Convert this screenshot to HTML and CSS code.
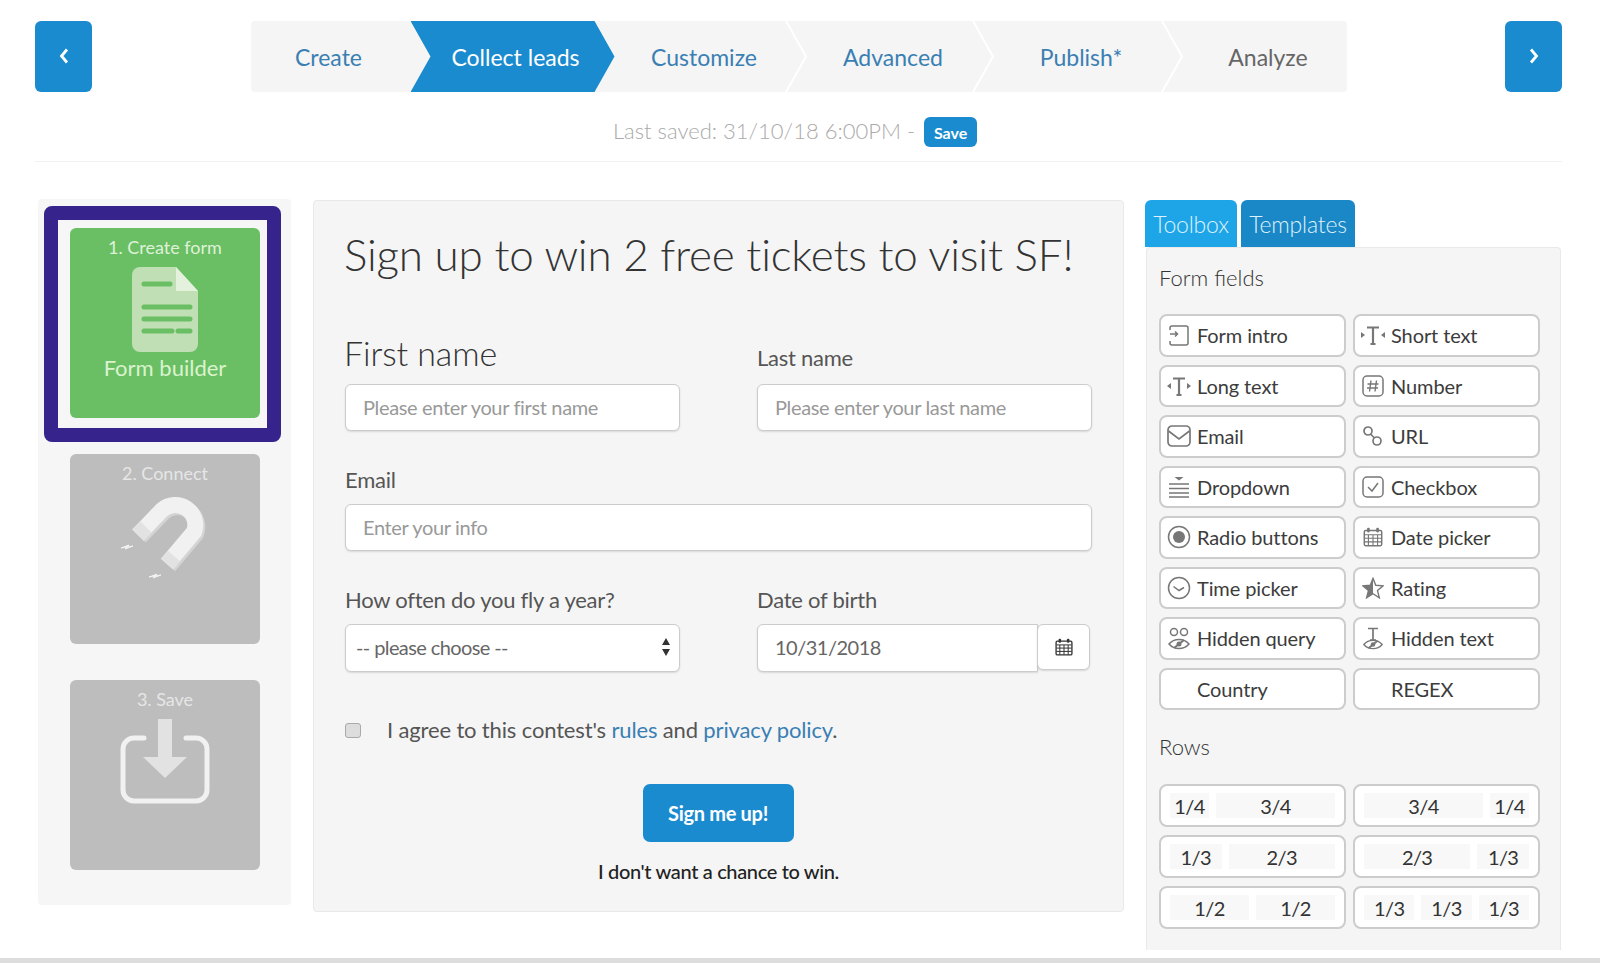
FILE: index.html
```html
<!DOCTYPE html>
<html lang="en">
<head>
    <meta charset="UTF-8">
    <meta name="viewport" content="width=device-width, initial-scale=1.0">
    <title>Form builder</title>
    <link rel="stylesheet" href="styles.css">
</head>
<body>
    <svg class="defs" aria-hidden="true">
        <symbol id="i-calendar" viewBox="0 0 24 24">
            <path d="M4 5h16a1.500 1.500 0 0 1 1.500 1.500V20a1.500 1.500 0 0 1-1.500 1.500H4A1.500 1.500 0 0 1 2.500 20V6.500A1.500 1.500 0 0 1 4 5z" fill="none" stroke="currentColor" stroke-width="1.600"/>
            <path d="M3 9.500h18M3 13.300h18M3 17.300h18M7 9.500v12M12 9.500v12M17 9.500v12" stroke="currentColor" stroke-width="1.200"/>
            <rect x="5.500" y="2" width="3" height="5" rx="1.200" fill="currentColor"/>
            <rect x="15.500" y="2" width="3" height="5" rx="1.200" fill="currentColor"/>
        </symbol>
        <symbol id="i-eye" viewBox="0 0 24 12">
            <path d="M2 6c5-6 15-6 20 0-5 6-15 6-20 0z" fill="none" stroke="currentColor" stroke-width="1.500"/>
            <path d="M7 10l10-8" stroke="currentColor" stroke-width="2"/>
            <circle cx="12" cy="6" r="2.500" fill="currentColor"/>
        </symbol>
    </svg>

    <header class="topbar">
        <div class="topbar-row">
            <button class="nav-btn">
                <svg width="12" height="16" viewBox="0 0 12 16"><path d="M9 1.500L3.500 8 9 14.500" fill="none" stroke="#fff" stroke-width="2.800"/></svg>
            </button>
            <nav class="steps">
                <a class="step step-first">Create</a>
                <a class="step step-active">Collect leads</a>
                <a class="step step-customize">Customize<svg class="step-sep" viewBox="0 0 22 71"><path d="M1 0l20 35.500L1 71" fill="none" stroke="#fff" stroke-width="2"/></svg></a>
                <a class="step step-advanced">Advanced<svg class="step-sep" viewBox="0 0 22 71"><path d="M1 0l20 35.500L1 71" fill="none" stroke="#fff" stroke-width="2"/></svg></a>
                <a class="step step-publish">Publish*<svg class="step-sep" viewBox="0 0 22 71"><path d="M1 0l20 35.500L1 71" fill="none" stroke="#fff" stroke-width="2"/></svg></a>
                <a class="step step-last">Analyze</a>
            </nav>
            <button class="nav-btn">
                <svg width="12" height="16" viewBox="0 0 12 16"><path d="M3 1.500L8.500 8 3 14.500" fill="none" stroke="#fff" stroke-width="2.800"/></svg>
            </button>
        </div>
        <div class="save-row">
            <span class="save-text">Last saved: 31/10/18 6:00PM</span>
            <span class="save-text">-</span>
            <button class="save-btn">Save</button>
        </div>
    </header>

    <main class="workspace">
        <aside class="sidebar">
            <div class="highlight">
                <div class="phase phase-green">
                    <div class="phase-title">1. Create form</div>
                    <svg class="phase-doc" width="66" height="85" viewBox="0 0 66 85">
                        <path d="M8 0h36l22 24v53a8 8 0 0 1-8 8H8a8 8 0 0 1-8-8V8a8 8 0 0 1 8-8z" fill="#c0dfb4"/>
                        <path d="M44 0l22 24H44z" fill="#e4f1dd"/>
                        <path d="M12 17h26M12 40h46M12 52h46M12 64h28M46 64h12" stroke="#6abf64" stroke-width="5" stroke-linecap="round"/>
                    </svg>
                    <div class="phase-label">Form builder</div>
                </div>
            </div>
            <div class="phase phase-gray phase-connect">
                <div class="phase-title">2. Connect</div>
                <svg class="phase-magnet" width="120" height="110" viewBox="0 0 120 110">
                    <path d="M30 57L54 32A20 20 0 0 1 86 54L59 86" fill="none" stroke="#d4d4d4" stroke-width="16"/>
                    <path d="M28 55L52 30A20 20 0 0 1 84 52L57 84" fill="none" stroke="#f1f1f1" stroke-width="16"/>
                    <path d="M28 55l8-8M57 84l7-8" stroke="#e2e2e2" stroke-width="16"/>
                    <path d="M11 68l8-3-2 2 6-1-8 3 2-2zM39 97l8-3-2 2 6-1-8 3 2-2z" fill="#f2f2f2" stroke="#f2f2f2"/>
                </svg>
            </div>
            <div class="phase phase-gray phase-save">
                <div class="phase-title">3. Save</div>
                <svg class="phase-icon" width="90" height="88" viewBox="0 0 90 88">
                    <path d="M24 20H14A11 11 0 0 0 3 31v41a11 11 0 0 0 11 11h62a11 11 0 0 0 11-11V31a11 11 0 0 0-11-11H66" fill="none" stroke="#f1f1f1" stroke-width="5" stroke-linecap="round"/>
                    <path d="M38 1h14v38h15L45 60 23 39h15z" fill="#e2e2e2"/>
                </svg>
            </div>
        </aside>

        <section class="form-panel">
            <h1>Sign up to win 2 free tickets to visit SF!</h1>
            <form class="form-grid">
                <div class="field field-end">
                    <label class="label-big">First name</label>
                    <input class="input" placeholder="Please enter your first name">
                </div>
                <div class="field field-end">
                    <label>Last name</label>
                    <input class="input" placeholder="Please enter your last name">
                </div>
                <div class="field field-wide">
                    <label>Email</label>
                    <input class="input" placeholder="Enter your info">
                </div>
                <div class="field">
                    <label>How often do you fly a year?</label>
                    <div class="select-wrap">
                        <select class="input select"><option>-- please choose --</option></select>
                        <svg class="select-arrows" width="10" height="18" viewBox="0 0 10 18"><path d="M5 0l4 7H1zM5 18l-4-7h8z" fill="#333"/></svg>
                    </div>
                </div>
                <div class="field">
                    <label>Date of birth</label>
                    <div class="date-group">
                        <input class="input date-input" value="10/31/2018">
                        <span class="date-addon"><svg width="20" height="22"><use href="#i-calendar"/></svg></span>
                    </div>
                </div>
            </form>
            <div class="agree">
                <input type="checkbox" class="agree-box">
                <span>I agree to this contest's <a>rules</a> and <a>privacy policy</a>.</span>
            </div>
            <div class="submit-row"><button class="submit-btn">Sign me up!</button></div>
            <div class="decline">I don't want a chance to win.</div>
        </section>

        <aside class="toolbox">
            <div class="tabs">
                <div class="tab tab-on">Toolbox</div>
                <div class="tab">Templates</div>
            </div>
            <div class="tool-panel">
                <div class="tool-heading">Form fields</div>
                <div class="tool-grid">
                    <div class="tool"><span class="tool-icon"><svg width="24" height="24" viewBox="0 0 24 24" fill="none" stroke="currentColor" stroke-width="1.500"><path d="M3 7V5a2 2 0 0 1 2-2h14a2 2 0 0 1 2 2v15a2 2 0 0 1-2 2H5a2 2 0 0 1-2-2v-2"/><path d="M3 11h7M8 8.500L10.500 11 8 13.500"/></svg></span>Form intro</div>
                    <div class="tool"><span class="tool-icon"><svg width="24" height="24" viewBox="0 0 24 24"><path d="M6 4.500h12M12 4.500V21M9.500 21h5" fill="none" stroke="currentColor" stroke-width="2.200"/><path d="M0 9l4 3-4 3zM24 9l-4 3 4 3z" fill="currentColor"/></svg></span>Short text</div>
                    <div class="tool"><span class="tool-icon"><svg width="24" height="24" viewBox="0 0 24 24"><path d="M6 4.500h12M12 4.500V21M9.500 21h5" fill="none" stroke="currentColor" stroke-width="2.200"/><path d="M4 9l-4 3 4 3zM20 9l4 3-4 3z" fill="currentColor"/></svg></span>Long text</div>
                    <div class="tool"><span class="tool-icon"><svg width="24" height="24" viewBox="0 0 24 24"><rect x="2" y="2" width="20" height="20" rx="4" fill="none" stroke="currentColor" stroke-width="1.500"/><path d="M10 6.500L8.500 17.500M15.500 6.500L14 17.500M6.500 10h11M6 14h11" stroke="currentColor" stroke-width="1.400"/></svg></span>Number</div>
                    <div class="tool"><span class="tool-icon"><svg width="24" height="24" viewBox="0 0 24 24" fill="none" stroke="currentColor" stroke-width="1.700"><rect x="1" y="2" width="22" height="20" rx="4"/><path d="M1.500 7L12 15 22.500 7"/></svg></span>Email</div>
                    <div class="tool"><span class="tool-icon"><svg width="24" height="24" viewBox="0 0 24 24" fill="none" stroke="currentColor" stroke-width="1.700"><circle cx="7" cy="7" r="4"/><circle cx="16" cy="17" r="4"/><path d="M9.500 10l4 4"/></svg></span>URL</div>
                    <div class="tool"><span class="tool-icon"><svg width="24" height="24" viewBox="0 0 24 24"><path d="M7.500 2h9L12 5.500z" fill="currentColor"/><path d="M2 9h20M2 13.500h20M2 18h20M2 22h20" stroke="currentColor" stroke-width="1.600"/></svg></span>Dropdown</div>
                    <div class="tool"><span class="tool-icon"><svg width="24" height="24" viewBox="0 0 24 24" fill="none" stroke="currentColor" stroke-width="1.500"><rect x="2" y="2" width="20" height="20" rx="4"/><path d="M7 12l4 4 6-8"/></svg></span>Checkbox</div>
                    <div class="tool"><span class="tool-icon"><svg width="24" height="24" viewBox="0 0 24 24"><circle cx="12" cy="12" r="10.500" fill="none" stroke="currentColor" stroke-width="1.500"/><circle cx="12" cy="12" r="6" fill="currentColor"/></svg></span>Radio buttons</div>
                    <div class="tool"><span class="tool-icon"><svg width="22" height="22"><use href="#i-calendar"/></svg></span>Date picker</div>
                    <div class="tool"><span class="tool-icon"><svg width="24" height="24" viewBox="0 0 24 24" fill="none" stroke="currentColor" stroke-width="1.500"><circle cx="12" cy="12" r="10.500"/><path d="M6.500 10.500L12 14.500l5-3"/></svg></span>Time picker</div>
                    <div class="tool"><span class="tool-icon"><svg width="22" height="22" viewBox="0 0 24 24"><path d="M12 1.500l3 7.500 8 .6-6.100 5.200 2 7.900L12 18.300 5 22.700l2-7.900L1 9.600l8-.6z" fill="none" stroke="currentColor" stroke-width="1.500"/><path d="M12 2v16.300L5 22.700l2-7.900L1 9.600l8-.6z" fill="currentColor"/></svg></span>Rating</div>
                    <div class="tool"><span class="tool-icon"><svg width="24" height="24" viewBox="0 0 24 24"><circle cx="7" cy="6" r="3.500" fill="none" stroke="currentColor" stroke-width="1.500"/><circle cx="17" cy="6" r="3.500" fill="none" stroke="currentColor" stroke-width="1.500"/><use href="#i-eye" y="12" width="24" height="12"/></svg></span>Hidden query</div>
                    <div class="tool"><span class="tool-icon"><svg width="24" height="24" viewBox="0 0 24 24"><path d="M7 2.500h10M12 2.500V14M9 14h6" fill="none" stroke="currentColor" stroke-width="1.700"/><use href="#i-eye" y="13" width="24" height="11"/></svg></span>Hidden text</div>
                    <div class="tool"><span class="tool-icon"></span>Country</div>
                    <div class="tool"><span class="tool-icon"></span>REGEX</div>
                </div>
                <div class="tool-heading rows-heading">Rows</div>
                <div class="tool-grid rows-grid">
                    <div class="row-btn"><span class="cell c1">1/4</span><span class="cell c3">3/4</span></div>
                    <div class="row-btn"><span class="cell c3">3/4</span><span class="cell c1">1/4</span></div>
                    <div class="row-btn"><span class="cell c1t">1/3</span><span class="cell c2t">2/3</span></div>
                    <div class="row-btn"><span class="cell c2t">2/3</span><span class="cell c1t">1/3</span></div>
                    <div class="row-btn"><span class="cell ch">1/2</span><span class="cell ch">1/2</span></div>
                    <div class="row-btn"><span class="cell ch">1/3</span><span class="cell ch">1/3</span><span class="cell ch">1/3</span></div>
                </div>
            </div>
        </aside>
    </main>

    <div class="bottom-bar"></div>
</body>
</html>
```

FILE: styles.css
```css
:root {
    --blue: #1b8bcf;
    --panel: #f5f5f5;
    --line: #e9e9e9;
    --text: #555;
    --link: #3a7fb3;
}

* {
    margin: 0;
    padding: 0;
    box-sizing: border-box;
}

body {
    font-family: Lato, "Open Sans", sans-serif;
    background: #fff;
    color: var(--text);
    width: 1600px;
    height: 963px;
    overflow: hidden;
    display: flex;
    flex-direction: column;
}

.defs {
    width: 0;
    height: 0;
    position: absolute;
}

/* top bar */
.topbar {
    margin: 21px 38px 0 35px;
    border-bottom: 1px solid #f2f2f2;
    height: 141px;
}

.topbar-row {
    display: flex;
    justify-content: space-between;
    align-items: stretch;
    height: 71px;
}

.nav-btn {
    width: 57px;
    border: 0;
    border-radius: 6px;
    background: var(--blue);
    padding-top: 2px;
}

.steps {
    display: flex;
    width: 1096px;
    background: #f5f5f5;
    border-radius: 4px;
}

.step {
    position: relative;
    display: flex;
    align-items: center;
    justify-content: center;
    font-size: 23px;
    color: var(--link);
    padding-left: 28px;
}

.step-first {
    width: 160px;
    padding-left: 0;
    padding-right: 4px;
}

.step-active {
    width: 204px;
    margin-right: -20px;
    padding-left: 6px;
    background: var(--blue);
    color: #fff;
    z-index: 1;
    clip-path: polygon(0 0, 184px 0, 100% 50%, 184px 100%, 0 100%, 20px 50%);
}

.step-customize { width: 191px; }
.step-advanced { width: 187px; }
.step-publish { width: 189px; }

.step-last {
    width: 185px;
    color: #666;
}

.step-sep {
    position: absolute;
    top: 0;
    right: -21px;
    width: 22px;
    height: 71px;
    z-index: 1;
}

.save-row {
    display: flex;
    justify-content: center;
    align-items: center;
    gap: 6px;
    height: 30px;
    margin-top: 25px;
    padding-right: 7px;
    font-size: 22px;
    font-weight: 300;
    color: #aaa;
}

.save-text {
    padding-bottom: 3px;
}

.save-btn {
    width: 53px;
    height: 30px;
    margin-left: 3px;
    border: 0;
    border-radius: 6px;
    background: var(--blue);
    color: #fff;
    font: 700 16px Lato, sans-serif;
}

/* columns */
.workspace {
    flex: 1;
    display: flex;
    align-items: flex-start;
    padding: 37px 0 0 38px;
}

.sidebar {
    width: 253px;
    height: 706px;
    background: #f6f6f6;
    border-radius: 4px;
    padding: 7px 0 0 6px;
}

.highlight {
    width: 237px;
    height: 236px;
    border: 14px solid #36248c;
    border-radius: 8px;
    background: #f6f6f6;
    padding: 8px 0 0 12px;
}

.phase {
    width: 190px;
    height: 190px;
    border-radius: 6px;
    text-align: center;
}

.phase-title {
    font-size: 18px;
    line-height: 24px;
    padding-top: 7px;
    height: 31px;
}

.phase-green {
    background: #6abf64;
    color: #dff1d8;
}

.phase-doc {
    display: block;
    margin: 8px auto 0;
}

.phase-label {
    font-size: 22px;
    line-height: 30px;
    color: #daf3ce;
    margin-top: 1px;
}

.phase-gray {
    background: #bdbdbd;
    color: #e6e6e6;
    margin-left: 26px;
}

.phase-connect {
    margin-top: 12px;
}

.phase-magnet {
    display: block;
    margin: -5px 0 0 40px;
}

.phase-save {
    margin-top: 36px;
}

.phase-icon {
    display: block;
    margin: 7px auto 0;
}

/* form */
.form-panel {
    width: 811px;
    height: 712px;
    margin: 1px 0 0 22px;
    padding: 23px 32px 0 31px;
    background: var(--panel);
    border: 1px solid var(--line);
    border-radius: 4px;
}

h1 {
    font-size: 44px;
    font-weight: 300;
    line-height: 60px;
    letter-spacing: -0.2px;
    margin-left: -1px;
    color: #333;
    white-space: nowrap;
}

.form-grid {
    display: grid;
    grid-template-columns: 335px 335px;
    column-gap: 77px;
    row-gap: 34px;
    margin-top: 49px;
    width: 747px;
}

.field-end {
    display: flex;
    flex-direction: column;
    justify-content: flex-end;
}

.field-wide {
    grid-column: span 2;
}

label {
    display: block;
    font-size: 22px;
    line-height: 30px;
    letter-spacing: -0.25px;
    margin-bottom: 9px;
}

.field-end label {
    margin-bottom: 11px;
}

.field-end .label-big {
    font-size: 34px;
    font-weight: 300;
    line-height: 40px;
    letter-spacing: -0.1px;
    margin-left: -1px;
    color: #333;
}

.input {
    display: block;
    width: 100%;
    height: 47px;
    padding: 0 17px 2px;
    border: 1px solid #ccc;
    border-radius: 6px;
    background: #fff;
    box-shadow: 0 1px 2px rgba(0, 0, 0, 0.12);
    font: 20px Lato, sans-serif;
    letter-spacing: -0.35px;
    color: #666;
    outline: none;
}

.input::placeholder {
    color: #999;
    opacity: 1;
}

.select-wrap {
    position: relative;
}

.select {
    appearance: none;
    height: 48px;
    padding-left: 10px;
    letter-spacing: -0.6px;
}

.select-arrows {
    position: absolute;
    top: 14px;
    right: 9px;
}

.date-group {
    display: flex;
    align-items: flex-start;
}

.date-input {
    width: 281px;
    height: 48px;
    border-radius: 6px 0 0 6px;
    letter-spacing: -0.5px;
}

.date-addon {
    display: flex;
    align-items: center;
    justify-content: center;
    width: 53px;
    height: 46px;
    margin-left: -1px;
    background: #fff;
    border: 1px solid #ccc;
    border-radius: 6px;
    box-shadow: 0 1px 2px rgba(0, 0, 0, 0.12);
    color: #333;
}

.agree {
    display: flex;
    align-items: center;
    gap: 26px;
    height: 30px;
    margin-top: 42px;
    font-size: 22px;
    letter-spacing: -0.15px;
}

.agree a {
    color: var(--link);
}

.agree-box {
    appearance: none;
    width: 16px;
    height: 15px;
    margin-top: 2px;
    border: 1px solid #aaa;
    border-radius: 3px;
    background: #ddd;
}

.submit-row {
    display: flex;
    justify-content: center;
    margin-top: 40px;
}

.submit-btn {
    width: 151px;
    height: 58px;
    border: 0;
    border-radius: 7px;
    background: var(--blue);
    color: #fff;
    font: 700 20px Lato, sans-serif;
    letter-spacing: -0.3px;
}

.decline {
    margin-top: 14px;
    padding-left: 1px;
    text-align: center;
    font-size: 20px;
    font-weight: 500;
    line-height: 30px;
    letter-spacing: -0.35px;
    color: #222;
}

/* toolbox */
.toolbox {
    width: 416px;
    margin: 1px 0 0 21px;
}

.tabs {
    display: flex;
    gap: 4px;
    height: 47px;
}

.tab {
    display: flex;
    align-items: center;
    justify-content: center;
    width: 114px;
    border-radius: 6px 6px 0 0;
    background: #1a87c7;
    color: #dff2fc;
    font-size: 23px;
    font-weight: 300;
    letter-spacing: -0.2px;
}

.tab-on {
    width: 92px;
    background: #1ea5e8;
}

.tool-panel {
    height: 703px;
    padding: 15px 0 0 12px;
    margin-left: 1px;
    background: var(--panel);
    border: 1px solid var(--line);
    border-bottom: 0;
    border-radius: 4px 4px 0 0;
}

.tool-heading {
    font-size: 22px;
    font-weight: 300;
    line-height: 30px;
    color: #333;
}

.tool-grid {
    display: grid;
    grid-template-columns: 187px 187px;
    column-gap: 7px;
    grid-auto-rows: 42.5px;
    row-gap: 8px;
    margin-top: 21px;
}

.tool {
    display: flex;
    align-items: center;
    padding-left: 5px;
    background: #fff;
    border: 2px solid #ccc;
    border-radius: 8px;
    font-size: 20px;
    letter-spacing: -0.1px;
    color: #3c3c3c;
}

.tool-icon {
    display: flex;
    align-items: center;
    justify-content: center;
    flex: none;
    width: 31px;
    padding-right: 5px;
    color: #777;
}

.rows-heading {
    margin-top: 22px;
}

.rows-grid {
    grid-auto-rows: 43px;
    row-gap: 8px;
    margin-top: 22px;
}

.row-btn {
    display: flex;
    gap: 7px;
    padding: 7px 9px;
    background: #fff;
    border: 2px solid #ccc;
    border-radius: 8px;
    font-size: 20px;
    letter-spacing: -0.6px;
    color: #333;
}

.cell {
    display: flex;
    align-items: center;
    justify-content: center;
    background: #f8f8f8;
}

.c1 { flex: 40 0 0; }
.c3 { flex: 122 0 0; }
.c1t { flex: 53 0 0; }
.c2t { flex: 109 0 0; }
.ch { flex: 1 0 0; }

.bottom-bar {
    flex: none;
    height: 5px;
    background: #ddd;
}
```
